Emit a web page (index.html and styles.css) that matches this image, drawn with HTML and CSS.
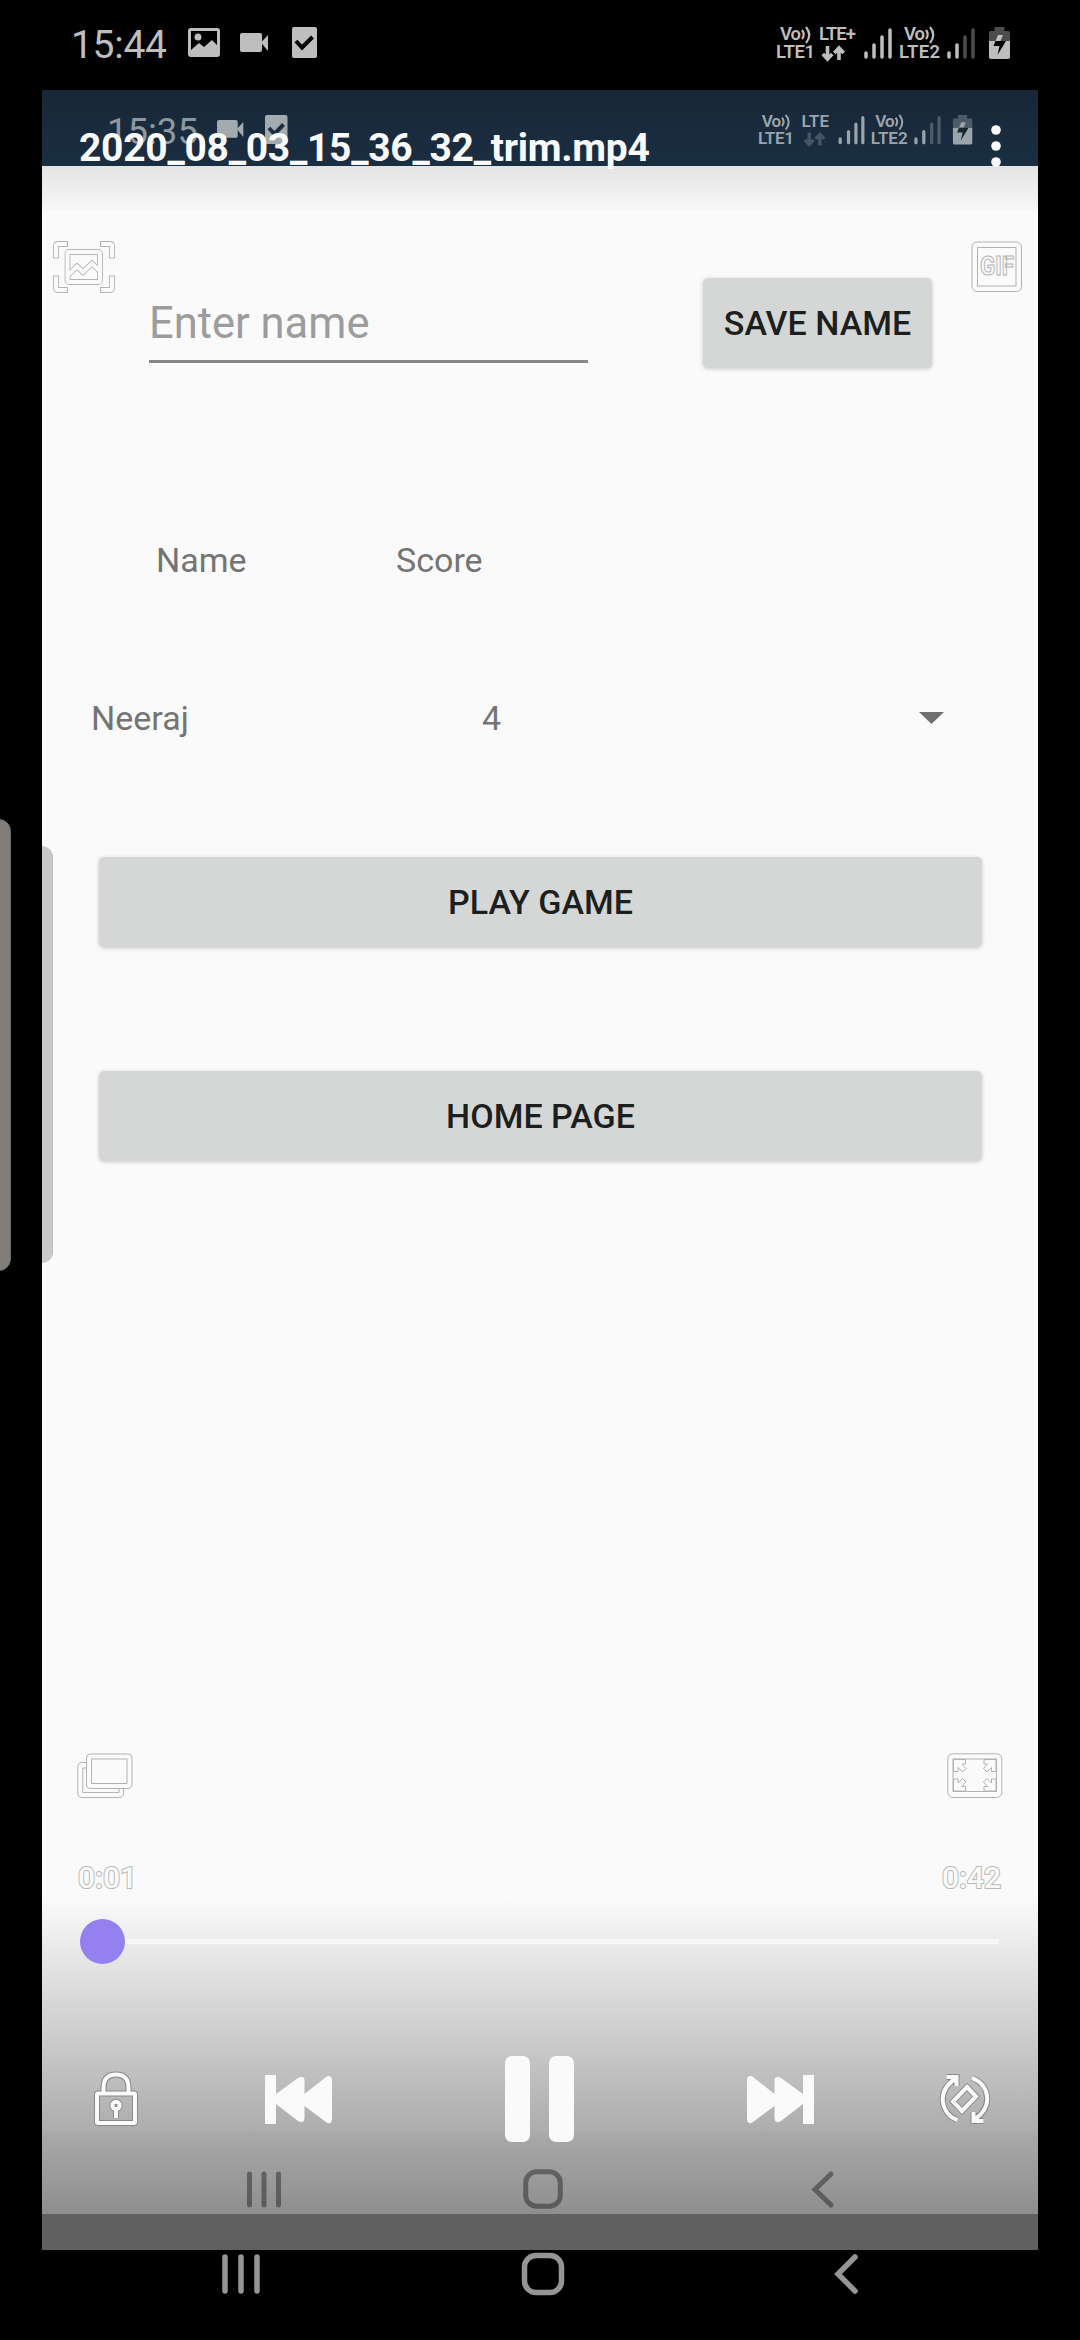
FILE: index.html
```html
<!DOCTYPE html>
<html lang="en">
<head>
<meta charset="utf-8">
<title>2020_08_03_15_36_32_trim.mp4</title>
<link rel="stylesheet" href="styles.css">
</head>
<body>
<svg class="defs" width="0" height="0">
  <defs>
    <g id="camera"><rect width="22" height="19" rx="2"/><path d="M21 9.500L28 2V18Z"/></g>
    <g id="battery">
      <path opacity=".4" d="M5.500 0H15.500V4H19.500Q21 4 21 5.500V14H0V5.500Q0 4 1.500 4H5.500Z"/>
      <path d="M0 14H21V30Q21 32 19 32H2Q0 32 0 30Z"/>
      <path d="M9 8H14L11.500 14H6.500Z"/>
      <path class="bolt" d="M6.500 14H17L8.500 28L10.500 19H4.500Z"/>
    </g>
    <g id="waves" fill="none" stroke="currentColor" stroke-width="2.200"><path d="M0 3Q3.500 7.500 0 12M4 0Q10.500 8 4 16"/></g>
    <g id="arrows" fill="none" stroke="currentColor" stroke-width="3.600"><path d="M5.500 0V13M.8 8L5.500 13L10.200 8"/><path d="M17 14V2M12.300 7L17 2L21.700 7"/></g>
    <g id="nav-recents"><path d="M3 3V37M19 3V37M35 3V37"/></g>
    <path id="skip" d="M0 0H11V19L33 3Q37 1 39 3Q39.500 4 39.500 6V19L61 2Q64 0 66 2Q67 3 67 5V44Q67 47 65 48Q63 49 61 47L39.500 31V43Q39.500 46 37 47Q35 47.500 33 46L11 29V49H0Z"/>
  </defs>
</svg>

<div class="phone">
  <header class="status">
    <span class="clock">15:44</span>
    <svg class="status-left" width="130" height="34" viewBox="0 0 130 34">
      <path fill-rule="evenodd" d="M3 2H29Q32 2 32 5V28Q32 31 29 31H3Q0 31 0 28V5Q0 2 3 2ZM3 5V24L11 17L16 21L24 14L29 19V5Z"/>
      <circle cx="10" cy="11" r="3.500"/>
      <use href="#camera" x="52" y="7"/>
      <rect x="104" y="1" width="25" height="31" rx="2"/>
      <path class="tick" stroke="#000" d="M108 15L114 21.500L124.500 11"/>
    </svg>
    <svg class="status-right" width="236" height="36" viewBox="0 0 236 36">
      <text x="4" y="14" textLength="21">Vo</text><use href="#waves" x="26" y="1"/>
      <text x="0" y="32" textLength="39" class="lte">LTE1</text>
      <text x="43" y="14" textLength="37">LTE+</text><use href="#arrows" x="46" y="20"/>
      <path class="bars" d="M90 31V27M98 31V19M106 31V11M114 31V4"/>
      <text x="128" y="14" textLength="21">Vo</text><use href="#waves" x="150" y="1"/>
      <text x="123" y="32" textLength="41" class="lte">LTE2</text>
      <path class="bars" d="M173 31V27M181 31V19"/><path class="bars dim" d="M189 31V11M197 31V4"/>
      <use href="#battery" x="213" y="1"/>
    </svg>
  </header>

  <main class="screen">
    <div class="app">
      <div class="app-status">
        <span class="app-clock">15:35</span>
        <svg class="app-status-left" width="72" height="32" viewBox="0 0 72 32">
          <use href="#camera" transform="translate(0 6) scale(.94)"/>
          <rect x="48" y="1" width="22.500" height="29" rx="2"/>
          <path class="tick" stroke="#1b2e40" d="M52 14L57.500 20L66.500 10.500"/>
        </svg>
        <svg class="app-status-right" width="218" height="34" viewBox="0 0 236 36.800">
          <text x="4" y="14" textLength="21">Vo</text><use href="#waves" x="26" y="1"/>
          <text x="0" y="32" textLength="39" class="lte">LTE1</text>
          <text x="47" y="14" textLength="30">LTE</text><use href="#arrows" x="50" y="20" opacity=".35"/>
          <path class="bars" d="M89 31V27M98 31V19M106 31V11M113.500 31V4"/>
          <text x="127" y="14" textLength="21">Vo</text><use href="#waves" x="149" y="1"/>
          <text x="122" y="32" textLength="40" class="lte">LTE2</text>
          <path class="bars" d="M171 31V27M179.500 31V19"/><path class="bars dim" d="M188 31V11M196 31V4"/>
          <use href="#battery" x="211" y="1"/>
        </svg>
      </div>

      <div class="form">
        <div class="field">Enter name</div>
        <div class="button save">SAVE NAME</div>
      </div>
      <div class="heads"><span class="head-name">Name</span><span>Score</span></div>
      <div class="entry">
        <span class="entry-name">Neeraj</span><span class="entry-score">4</span>
        <svg width="25" height="12" viewBox="0 0 25 12"><path fill="#707070" d="M0 0H25L12.500 12Z"/></svg>
      </div>
      <div class="button play">PLAY GAME</div>
      <div class="button home">HOME PAGE</div>

      <div class="app-nav">
        <svg width="34" height="37" viewBox="0 0 34 37"><path d="M2.500 3V34M17 3V34M31.500 3V34"/></svg>
        <svg class="app-nav-home" width="40" height="40" viewBox="0 0 40 40"><rect x="2.700" y="2.700" width="34.600" height="34.600" rx="11"/></svg>
        <svg width="23" height="37" viewBox="0 0 23 37"><path d="M20 3L4 18.500L20 34"/></svg>
      </div>
      <div class="app-tail"></div>
      <div class="app-edge"></div>
    </div>

    <div class="player">
      <div class="title-row">
        <h1 class="title">2020_08_03_15_36_32_trim.mp4</h1>
        <svg class="kebab" width="10" height="42" viewBox="0 0 10 42"><circle cx="5" cy="5" r="4.800"/><circle cx="5" cy="21" r="4.800"/><circle cx="5" cy="37" r="4.800"/></svg>
      </div>
      <div class="capture-row">
        <svg class="line-icon" width="62" height="52" viewBox="0 0 62 52">
          <defs>
            <path id="corners" d="M3 17.500V5Q3 3 5 3H15M47 3H57Q59 3 59 5V17.500M3 34.500V47Q3 49 5 49H15M47 49H57Q59 49 59 47V34.500"/>
            <path id="corner-core" d="M3 16.500V5Q3 3 5 3H14M48 3H57Q59 3 59 5V16.500M3 35.500V47Q3 49 5 49H14M48 49H57Q59 49 59 47V35.500"/>
            <g id="photo"><rect x="14.500" y="11" width="32.500" height="30" rx="1.500"/><path d="M15 34L24 25.500L30 31L39 22.500L47 30"/></g>
          </defs>
          <use href="#corners" class="rim"/><use href="#corner-core" class="core"/>
          <use href="#photo" class="rim"/><use href="#photo" class="core"/>
        </svg>
        <svg class="line-icon" width="52" height="52" viewBox="0 0 52 52">
          <rect x="1" y="1" width="49.500" height="49.500" rx="5" class="hair"/><rect x="6.500" y="6.500" width="38.500" height="38.500" class="hair"/>
          <text class="gif" x="9" y="34" textLength="34" lengthAdjust="spacingAndGlyphs">GIF</text>
        </svg>
      </div>

      <div class="mode-row">
        <svg class="line-icon" width="56" height="46" viewBox="0 0 56 46">
          <path class="hair" d="M13.500 1H51Q55 1 55 5V31Q55 35.500 51 35.500H13.500Q9.500 35.500 9.500 31V5Q9.500 1 13.500 1ZM14.500 6H50V30.500H14.500Z"/>
          <path class="hair" d="M9.500 9.500H5Q.8 9.500 .8 14V40Q.8 44.500 5 44.500H42Q46.500 44.500 46.500 40V35.500M9.500 15H5.800V39.500H42V35.500"/>
        </svg>
        <svg class="line-icon" width="56" height="46" viewBox="0 0 56 46">
          <rect class="hair" x=".8" y=".8" width="54" height="43.700" rx="5"/><rect class="hair" x="6" y="6" width="43.500" height="32.500"/>
          <defs><path id="fit" d="M0 0H12V4.500H8.500L12.500 9L9 12.500L4.500 8V12H0Z"/></defs>
          <g class="hair">
            <use href="#fit" transform="translate(6.500 6.500)"/>
            <use href="#fit" transform="translate(49 6.500) scale(-1 1)"/>
            <use href="#fit" transform="translate(6.500 38) scale(1 -1)"/>
            <use href="#fit" transform="translate(49 38) scale(-1 -1)"/>
          </g>
        </svg>
      </div>
      <div class="time-row"><span>0:01</span><span>0:42</span></div>
      <div class="seek"><div class="thumb"></div><div class="track"></div></div>
      <div class="controls">
        <svg class="lock" width="44" height="56" viewBox="0 0 44 56">
          <defs><g id="lock"><path d="M9.500 22V17Q9.500 3.500 22 3.500T34.500 17V22"/><rect x="3" y="22.500" width="38" height="29.500" rx="1"/><circle cx="22" cy="34.500" r="3.700"/><path d="M22 38V47"/></g></defs>
          <use href="#lock" class="dark-rim"/><use href="#lock" class="core"/>
        </svg>
        <svg class="prev" width="67" height="49" viewBox="0 0 67 49"><use href="#skip"/></svg>
        <div class="pause"></div>
        <svg class="next" width="67" height="49" viewBox="0 0 67 49"><use href="#skip" transform="translate(67 0) scale(-1 1)"/></svg>
        <svg class="rotate" width="50" height="50" viewBox="0 0 50 50">
          <defs><g id="rotate"><path d="M17.500 46C1 40 -4 18 15 5M6.500 3H16.500V12M32 4C49 10 54 32 35 45M43.500 47H33.500V38"/><path d="M27 13L36 22.500L22 37L13 27.500Z"/></g></defs>
          <use href="#rotate" class="dark-rim"/><use href="#rotate" class="core"/>
        </svg>
      </div>
    </div>
  </main>

  <footer class="nav">
    <svg width="38" height="40" viewBox="0 0 38 40"><use href="#nav-recents"/></svg>
    <svg class="nav-home" width="42" height="42" viewBox="0 0 42 42"><rect x="2.500" y="2.500" width="37" height="37" rx="11.500"/></svg>
    <svg width="24" height="40" viewBox="0 0 24 40"><path d="M21 3L4 20L21 37"/></svg>
  </footer>
  <div class="edge-handle"></div>
</div>
</body>
</html>
```

FILE: styles.css
```css
* { box-sizing: border-box; }
body { margin: 0; background: #000; font-family: Roboto, "Liberation Sans", sans-serif; }
svg { display: block; flex: none; overflow: visible; }
.defs { position: absolute; }
.phone { position: relative; width: 1080px; height: 2340px; overflow: hidden; display: flex; flex-direction: column; background: #000; }

.status { height: 90px; display: flex; padding: 26px 71px 0 71px; color: #bebebe; fill: currentColor; }
.clock { font-size: 39px; line-height: 38px; width: 117px; letter-spacing: -.3px; }
.status-right { margin-left: auto; margin-right: -3px; --bolt: #000; }
.status svg text, .app-status svg text { font-size: 18.500px; font-weight: 600; }
.tick { fill: none; stroke-width: 4; }
.bars { fill: none; stroke: currentColor; stroke-width: 3.500; stroke-linecap: round; }
.dim { opacity: .4; }
.bolt { fill: var(--bolt); }

.screen { position: relative; width: 996px; height: 2160px; margin-left: 42px; overflow: hidden; background: #fafafa; }
.app { height: 100%; display: flex; flex-direction: column; color: #747474; font-size: 34px; line-height: 40px; }
.app-status { height: 76px; flex: none; display: flex; padding: 24px 62px 0 65px; background: linear-gradient(#182737, #1a2e42); color: #a3abb1; fill: currentColor; }
.app-clock { font-size: 36.500px; line-height: 36px; width: 110px; opacity: .85; }
.app-status-right { margin-left: auto; --bolt: #1d2831; opacity: .95; }
.form { display: flex; margin-top: 112px; height: 90px; padding-left: 107px; gap: 115px; }
.field { width: 439px; height: 85px; border-bottom: 3px solid #868886; color: #9c9c9c; font-size: 43.500px; line-height: 92px; }
.button { height: 90px; border-radius: 5px; background: #d5d7d6; color: #1d1f1e; font-weight: 500; line-height: 91px; text-align: center; box-shadow: 0 1px 4px rgba(0,0,0,.2); }
.save { width: 229px; }
.heads { display: flex; margin-top: 172px; padding-left: 114px; }
.head-name { width: 240px; }
.entry { display: flex; align-items: center; margin-top: 118px; padding-left: 49px; }
.entry-name { width: 391px; }
.entry-score { width: 437px; }
.play, .home { width: 883px; margin-left: 57px; }
.play { margin-top: 119px; }
.home { margin-top: 124px; }
.app-nav { margin-top: auto; height: 81px; display: flex; align-items: center; padding: 31px 0 0 205px; background: #f5f5f5; fill: none; stroke: #999; stroke-width: 5; stroke-linecap: round; }
.app-nav-home { margin: 0 248px 0 242px; }
.app-tail { height: 36px; background: #fafafa; }
.app-edge { position: absolute; left: -12px; top: 756px; width: 23px; height: 417px; border-radius: 12px; background: #cac9c5; border-right: 1px solid #bbb; }

/* Player chrome laid over the playing video */
.player { position: absolute; inset: 0; display: flex; flex-direction: column; color: #fafafa; fill: currentColor;
  background: linear-gradient(transparent, rgba(0,0,0,.42)) 0 1808px/100% 316px no-repeat,
    linear-gradient(rgba(0,0,0,.615), rgba(0,0,0,.615)) 0 2124px/100% 36px no-repeat,
    linear-gradient(rgba(0,0,0,.1), rgba(0,0,0,.01)) 0 0/100% 0 no-repeat,
    linear-gradient(rgba(0,0,0,.09), rgba(0,0,0,.01)) 0 76px/100% 44px no-repeat;
}
.title-row { display: flex; height: 151px; padding: 33px 36px 0 37px; justify-content: space-between; }
.title { margin: 0; font-size: 39px; line-height: 50px; font-weight: 700; letter-spacing: -.28px; white-space: nowrap; }
.kebab { margin-top: 2px; margin-right: 1px; }
.capture-row { display: flex; justify-content: space-between; padding: 0 15px 0 11px; }
.line-icon { fill: none; }
.hair { fill: none; stroke: #b2b2b2; stroke-width: 1; }
.rim { fill: none; stroke: #b5b5b5; stroke-width: 5.800; }
.dark-rim { fill: none; stroke: #898989; stroke-width: 6; }
.core { fill: none; stroke: #fafafa; stroke-width: 4; }
.gif { font-size: 25px; font-weight: 700; fill: #fafafa; stroke: #b2b2b2; stroke-width: 1; }
.mode-row { display: flex; justify-content: space-between; margin-top: 1460px; padding: 0 35px; }
.time-row { display: flex; justify-content: space-between; margin-top: 57px; padding: 0 37px 0 36px; height: 44px; font-size: 30px; font-weight: 500; line-height: 44px; -webkit-text-stroke: 2px #b8b8b8; paint-order: stroke fill; }
.seek { display: flex; align-items: center; height: 45px; margin-top: 19px; padding: 0 39px 0 38px; }
.thumb { width: 45px; height: 45px; border-radius: 50%; background: #9580ef; }
.track { flex: 1; height: 5px; background: #f6f6f6; }
.controls { display: flex; align-items: center; height: 90px; margin-top: 90px; padding-left: 52px; }
.prev { margin-left: 127px; }
.pause { width: 69px; height: 86px; margin-left: 173px; display: flex; justify-content: space-between; }
.pause::before, .pause::after { content: ""; width: 25px; border-radius: 7px; background: #fafafa; }
.next { margin-left: 173px; }
.rotate { margin-left: 126px; }

.nav { height: 90px; display: flex; padding: 4px 0 0 222px; align-items: flex-start; fill: none; stroke: #959595; stroke-width: 5.500; stroke-linecap: round; }
.nav-home { margin: -1px 270px 0 262px; }
.edge-handle { position: absolute; left: -14px; top: 819px; width: 25px; height: 452px; border-radius: 12px; background: #827d79; border: 1px solid #6a6b6b; }
```
